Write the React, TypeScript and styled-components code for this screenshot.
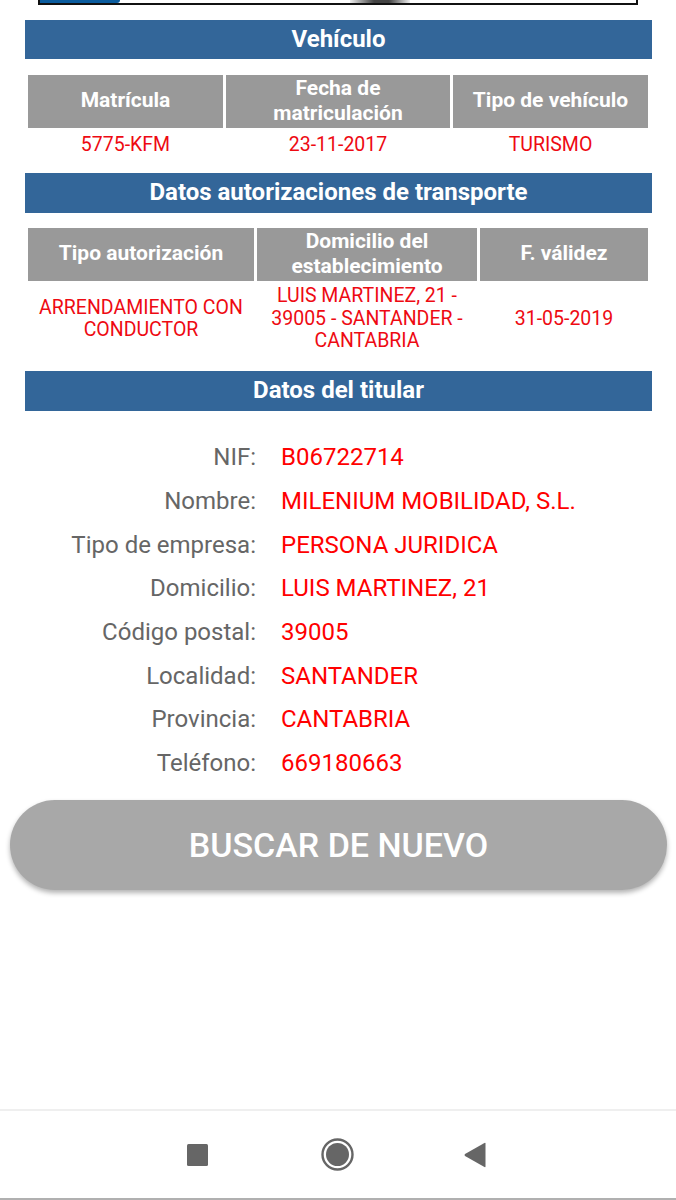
import React from "react";
import styled, { createGlobalStyle } from "styled-components";

const GlobalStyle = createGlobalStyle`
  html, body {
    margin: 0;
    padding: 0;
    background: #fff;
    font-family: Roboto, "Liberation Sans", sans-serif;
  }
`;

const Screen = styled.div`
  width: 676px;
  height: 1200px;
  display: flex;
  flex-direction: column;
  overflow: hidden;
  background: #fff;
`;

const Content = styled.main`
  flex: 1;
  display: flex;
  flex-direction: column;
`;

const Banner = styled.div`
  height: 3px;
  margin: 0 38px;
  display: flex;
  justify-content: center;
  border: solid #111;
  border-width: 0 2px 2px;
  background: #fff;
  position: relative;
  overflow: hidden;
`;

const BannerBlue = styled.span`
  position: absolute;
  left: 0;
  top: 0;
  width: 80px;
  height: 3px;
  background: #0b5c9e;
  border-bottom-right-radius: 12px;
`;

const BannerShade = styled.span`
  width: 60px;
  height: 3px;
  margin-left: 84px;
  background: linear-gradient(90deg, #eee, #444 40%, #444 65%, #eee);
`;

const Sections = styled.div`
  padding: 14.5px 24px 0 25px;
  display: flex;
  flex-direction: column;
`;

const SectionBar = styled.h2<{ $gap?: number }>`
  margin: ${(p) => p.$gap ?? 0}px 0 0;
  height: 39.5px;
  line-height: 39.5px;
  background: #336699;
  color: #fff;
  font-size: 24px;
  font-weight: 700;
  text-align: center;
`;

const DataTable = styled.div<{ $cols: string; $top: number }>`
  display: grid;
  grid-template-columns: ${(p) => p.$cols};
  column-gap: 3px;
  padding: ${(p) => p.$top}px 3px 0;
`;

const HeadCell = styled.div`
  height: 53px;
  padding: 0 10px 1px;
  box-sizing: border-box;
  background: #999;
  color: #fff;
  font-size: 21px;
  line-height: 25px;
  font-weight: 700;
  text-align: center;
  display: flex;
  align-items: center;
  justify-content: center;
`;

const ValueCell = styled.div<{ $height: number; $drop?: number }>`
  height: ${(p) => p.$height}px;
  padding-top: ${(p) => p.$drop ?? 0}px;
  box-sizing: border-box;
  color: #ee0a12;
  font-size: 19.5px;
  line-height: 22.5px;
  text-align: center;
  display: flex;
  align-items: center;
  justify-content: center;
`;

const HolderList = styled.dl`
  margin: 25px 0 0;
  display: grid;
  grid-template-columns: 256px 1fr;
  column-gap: 25px;
  grid-auto-rows: 43.65px;
  align-items: center;
`;

const HolderLabel = styled.dt`
  color: #666;
  font-size: 24px;
  text-align: right;
`;

const HolderValue = styled.dd`
  margin: 0;
  color: #f00;
  font-size: 24px;
`;

const SearchButton = styled.button`
  display: block;
  margin: 15px 9px 0 10px;
  height: 90px;
  border: 0;
  border-radius: 45px;
  background: #a8a8a8;
  color: #fff;
  font-family: inherit;
  font-size: 34px;
  font-weight: 500;
  box-shadow: 0 3px 5px rgba(0, 0, 0, 0.3);
`;

const NavBar = styled.nav`
  height: 87px;
  border-top: 2px solid #efefef;
  border-bottom: 2px solid #b0b0b0;
  display: flex;
  align-items: center;
  justify-content: center;
  padding-right: 3px;
`;

const NavInner = styled.div`
  display: flex;
  align-items: center;
  gap: 110px;
`;

const vehicleRows = [
  { head: "Matrícula", value: "5775-KFM" },
  { head: "Fecha de matriculación", value: "23-11-2017" },
  { head: "Tipo de vehículo", value: "TURISMO" },
];

const authRows = [
  { head: "Tipo autorización", value: "ARRENDAMIENTO CON CONDUCTOR" },
  { head: "Domicilio del establecimiento", value: "LUIS MARTINEZ, 21 - 39005 - SANTANDER - CANTABRIA" },
  { head: "F. válidez", value: "31-05-2019" },
];

const holder = [
  ["NIF:", "B06722714"],
  ["Nombre:", "MILENIUM MOBILIDAD, S.L."],
  ["Tipo de empresa:", "PERSONA JURIDICA"],
  ["Domicilio:", "LUIS MARTINEZ, 21"],
  ["Código postal:", "39005"],
  ["Localidad:", "SANTANDER"],
  ["Provincia:", "CANTABRIA"],
  ["Teléfono:", "669180663"],
];

export default function App() {
  return (
    <Screen>
      <GlobalStyle />
      <Content>
        <Banner>
          <BannerBlue />
          <BannerShade />
        </Banner>
        <Sections>
          <SectionBar>Vehículo</SectionBar>
          <DataTable $cols="195px 224px 195px" $top={15.5}>
            {vehicleRows.map((r) => (
              <HeadCell key={r.head}>{r.head}</HeadCell>
            ))}
            {vehicleRows.map((r) => (
              <ValueCell key={r.head} $height={30.5} $drop={4}>{r.value}</ValueCell>
            ))}
          </DataTable>
          <SectionBar $gap={15}>Datos autorizaciones de transporte</SectionBar>
          <DataTable $cols="226px 220px 168px" $top={15}>
            {authRows.map((r) => (
              <HeadCell key={r.head}>{r.head}</HeadCell>
            ))}
            {authRows.map((r) => (
              <ValueCell key={r.head} $height={77}>{r.value}</ValueCell>
            ))}
          </DataTable>
          <SectionBar $gap={13.5}>Datos del titular</SectionBar>
        </Sections>
        <HolderList>
          {holder.map(([label, value]) => (
            <React.Fragment key={label}>
              <HolderLabel>{label}</HolderLabel>
              <HolderValue>{value}</HolderValue>
            </React.Fragment>
          ))}
        </HolderList>
        <SearchButton>BUSCAR DE NUEVO</SearchButton>
      </Content>
      <NavBar>
        <NavInner>
          <svg width="24" height="22" viewBox="0 0 24 22">
            <rect x="0" y="0" width="21" height="22" rx="1.5" fill="#666" />
          </svg>
          <svg width="33" height="33" viewBox="0 0 33 33">
            <circle cx="16.5" cy="16.5" r="15" fill="none" stroke="#666" strokeWidth="2.4" />
            <circle cx="16.5" cy="16.5" r="11.5" fill="#666" />
          </svg>
          <svg width="22" height="26" viewBox="0 0 22 26">
            <path d="M21.5 1.5 L21.5 24.5 Q21.5 25.6 20 24.8 L1 14 Q0 13 1 12 L20 1.2 Q21.5 .4 21.5 1.5 Z" fill="#666" />
          </svg>
        </NavInner>
      </NavBar>
    </Screen>
  );
}
